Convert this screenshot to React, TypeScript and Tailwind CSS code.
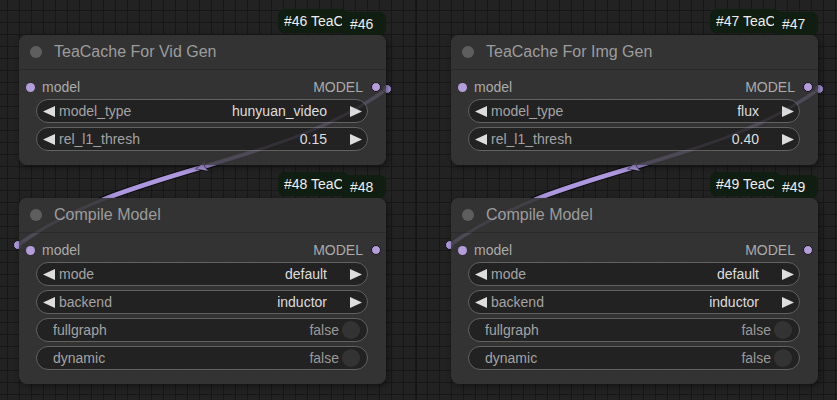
import React from "react";

const FONT = "font-['Liberation_Sans',Arial,sans-serif]";

function LeftArrow() {
  return (
    <svg width="12" height="11" viewBox="0 0 12 11" className="shrink-0">
      <polygon points="12,0 12,11 0,5.5" fill="#dddddd" />
    </svg>
  );
}

function RightArrow() {
  return (
    <svg width="12" height="11" viewBox="0 0 12 11" className="shrink-0">
      <polygon points="0,0 0,11 12,5.5" fill="#dddddd" />
    </svg>
  );
}

function ComboWidget({ label, value }: { label: string; value: string }) {
  return (
    <div className="h-[24px] rounded-full border border-[#616161] bg-[#222222] flex items-center pl-[6px] pr-[5px]">
      <LeftArrow />
      <span className="ml-[4px] text-[14px] leading-none text-[#a3a3a3]">{label}</span>
      <span className="ml-auto text-[14px] leading-none text-[#dddddd]">{value}</span>
      <span className="ml-[23px] flex">
        <RightArrow />
      </span>
    </div>
  );
}

function ToggleWidget({ label, value }: { label: string; value: string }) {
  return (
    <div className="h-[24px] rounded-full border border-[#616161] bg-[#222222] flex items-center pl-[16px] pr-[7px]">
      <span className="text-[14px] leading-none text-[#a3a3a3]">{label}</span>
      <span className="ml-auto text-[14px] leading-none text-[#999999]">{value}</span>
      <span className="ml-[3px] w-[18px] h-[18px] rounded-full bg-[#333333]" />
    </div>
  );
}

function Badges({ id }: { id: string }) {
  return (
    <>
      <div className="absolute left-[259px] top-[-26px] w-[70px] h-[24px] rounded-[6px] bg-[#0f1e11] flex items-center pl-[6px]">
        <span className="block w-[58px] overflow-hidden whitespace-nowrap text-[14px] leading-[16px] text-[#eeeeee]">
          #{id} TeaCache
        </span>
      </div>
      <div className="absolute right-0 top-[-23px] w-[44px] h-[23px] rounded-[6px] bg-[#0f1e11] flex items-center pl-[8px] text-[14px] leading-none text-[#eeeeee]">
        #{id}
      </div>
    </>
  );
}

function Node({
  className,
  id,
  title,
  children,
}: {
  className: string;
  id: string;
  title: string;
  children: React.ReactNode;
}) {
  return (
    <div className={className}>
      <Badges id={id} />
      <div className="h-[35px] flex items-center pl-[11px] gap-[12px] bg-[#333333]/90 rounded-t-[8px] border-b border-[#2a2a2a]">
        <span className="w-[12px] h-[12px] rounded-full bg-[#5e5e5e]" />
        <span className="text-[16px] leading-none text-[#9c9c9c]">{title}</span>
      </div>
      <div className="pt-[5px] pb-[14px]">
        <div className="h-[24px] flex items-center pl-[7px] pr-[5px]">
          <span className="w-[9px] h-[9px] rounded-full bg-[#b39ddb]" />
          <span className="ml-[7px] text-[14px] leading-none text-[#aaaaaa]">model</span>
          <span className="ml-auto text-[14px] leading-none text-[#aaaaaa]">MODEL</span>
          <span className="ml-[8px] w-[10px] h-[10px] rounded-full bg-[#b39ddb] border-[1.5px] border-[#151515]" />
        </div>
        <div className="pl-[17px] pr-[18px] flex flex-col gap-[4px]">{children}</div>
      </div>
    </div>
  );
}

const NODE =
  "absolute w-[367px] rounded-[8px] bg-[#353535]/90 shadow-[2px_2px_6px_rgba(0,0,0,0.45)]";

function Links({ faint }: { faint?: boolean }) {
  const paths = [
    "M387 89 C 276 169 129 165 18 245",
    "M819 89 C 708 169 561 165 450 245",
  ];
  if (faint) {
    return (
      <svg className="absolute inset-0 pointer-events-none" width="837" height="400">
        {paths.map((d) => (
          <path key={d} d={d} fill="none" stroke="#b39ddb" strokeOpacity="0.11" strokeWidth="3" />
        ))}
      </svg>
    );
  }
  return (
    <svg className="absolute inset-0" width="837" height="400">
      {paths.map((d, i) => (
        <g key={d}>
          <path d={d} fill="none" stroke="#000000" strokeOpacity="0.55" strokeWidth="7" />
          <path d={d} fill="none" stroke="#ae98e0" strokeWidth="4.5" />
          <circle cx={i === 0 ? 387 : 819} cy="89" r="4.5" fill="#ae98e0" stroke="#111" strokeWidth="1" />
          <circle cx={i === 0 ? 18 : 450} cy="245" r="4.5" fill="#ae98e0" stroke="#111" strokeWidth="1" />
          <g transform={`translate(${i === 0 ? 202.5 : 634.5} 167) rotate(163.6)`}>
            <polygon points="7,0 -5,-6 -2,0 -5,6" fill="#ae98e0" stroke="#000" strokeOpacity="0.5" strokeWidth="1" />
          </g>
        </g>
      ))}
    </svg>
  );
}

export default function App() {
  return (
    <div
      className={`${FONT} relative w-[837px] h-[400px] overflow-hidden bg-[#222222] bg-[image:linear-gradient(to_right,#171717_1px,transparent_1px),linear-gradient(to_bottom,#171717_1px,transparent_1px),linear-gradient(to_right,transparent_415px,#141414_415px,#141414_417px,transparent_417px)] bg-[size:12px_12px,12px_12px,100%_100%] bg-[position:7px_10px,7px_10px,0_0]`}
    >
      <Links />

      <Node className={`${NODE} left-[19px] top-[35px]`} id="46" title="TeaCache For Vid Gen">
        <ComboWidget label="model_type" value="hunyuan_video" />
        <ComboWidget label="rel_l1_thresh" value="0.15" />
      </Node>

      <Node className={`${NODE} left-[19px] top-[198px]`} id="48" title="Compile Model">
        <ComboWidget label="mode" value="default" />
        <ComboWidget label="backend" value="inductor" />
        <ToggleWidget label="fullgraph" value="false" />
        <ToggleWidget label="dynamic" value="false" />
      </Node>

      <Node className={`${NODE} left-[451px] top-[35px]`} id="47" title="TeaCache For Img Gen">
        <ComboWidget label="model_type" value="flux" />
        <ComboWidget label="rel_l1_thresh" value="0.40" />
      </Node>

      <Node className={`${NODE} left-[451px] top-[198px]`} id="49" title="Compile Model">
        <ComboWidget label="mode" value="default" />
        <ComboWidget label="backend" value="inductor" />
        <ToggleWidget label="fullgraph" value="false" />
        <ToggleWidget label="dynamic" value="false" />
      </Node>

      <Links faint />
    </div>
  );
}
